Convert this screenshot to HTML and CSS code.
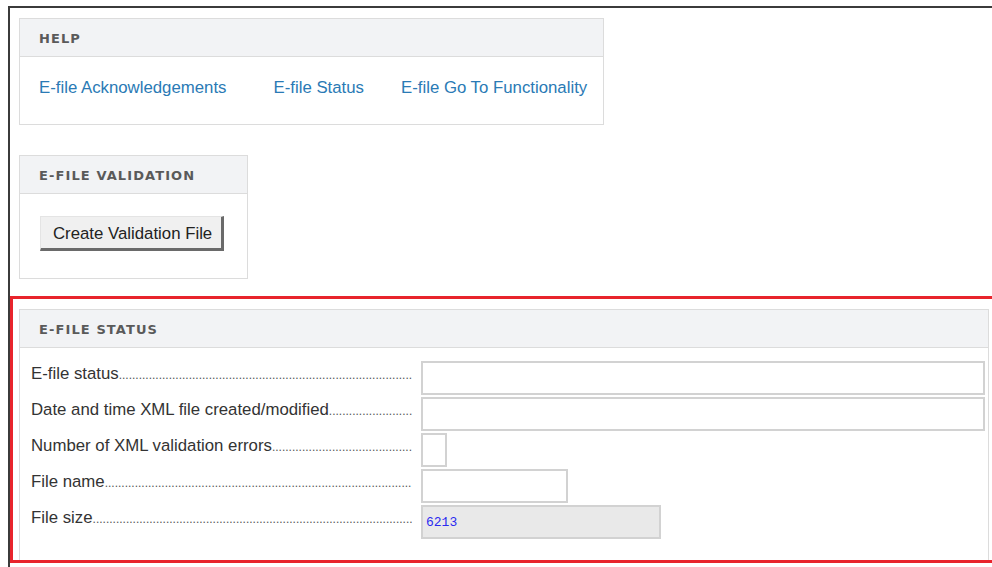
FILE: index.html
```html
<!DOCTYPE html>
<html lang="en">
<head>
<meta charset="utf-8">
<title>E-file</title>
<link rel="stylesheet" href="styles.css">
</head>
<body>
<div class="frame">
  <section class="panel panel-help">
    <h2 class="panel-head">Help</h2>
    <div class="panel-body help-links">
      <a href="#">E-file Acknowledgements</a>
      <a href="#">E-file Status</a>
      <a href="#">E-file Go To Functionality</a>
    </div>
  </section>

  <section class="panel panel-validation">
    <h2 class="panel-head">E-file Validation</h2>
    <div class="panel-body validation-body">
      <button type="button" class="btn">Create Validation File</button>
    </div>
  </section>

  <div class="highlight">
    <section class="panel panel-status">
      <h2 class="panel-head">E-file Status</h2>
      <div class="panel-body status-body">
        <div class="row">
          <label class="label">E-file status</label>
          <input class="field field-wide" type="text">
        </div>
        <div class="row">
          <label class="label">Date and time XML file created/modified</label>
          <input class="field field-wide" type="text">
        </div>
        <div class="row">
          <label class="label">Number of XML validation errors</label>
          <input class="field field-tiny" type="text">
        </div>
        <div class="row">
          <label class="label">File name</label>
          <input class="field field-name" type="text">
        </div>
        <div class="row">
          <label class="label">File size</label>
          <input class="field field-size" type="text" value="6213" readonly>
        </div>
      </div>
    </section>
  </div>
</div>
</body>
</html>
```
FILE: styles.css
```css
html, body {
  margin: 0;
  padding: 0;
  overflow: hidden;
  background: #fff;
}

body {
  font-family: "Liberation Sans", Arial, sans-serif;
  color: #333;
}

.frame {
  margin: 6px 0 0 8px;
  border-top: 2px solid #3b3b3b;
  border-left: 2px solid #3b3b3b;
  padding-top: 10px;
  height: calc(100vh - 6px);
  box-sizing: border-box;
}

.panel {
  border: 1px solid #dcdcdc;
  background: #fff;
  box-sizing: border-box;
}

.panel-head {
  margin: 0;
  height: 37px;
  line-height: 40px;
  padding-left: 19px;
  background: #f2f3f5;
  border-bottom: 1px solid #dcdcdc;
  font-family: "DejaVu Sans", Verdana, sans-serif;
  font-size: 13px;
  font-weight: 700;
  letter-spacing: 1.1px;
  text-transform: uppercase;
  color: #5a5a5a;
}

.panel-help {
  width: 585px;
  margin-left: 9px;
}

.help-links {
  height: 67px;
  display: flex;
  align-items: center;
  padding: 0 0 6px 19px;
  box-sizing: border-box;
  white-space: nowrap;
}

.help-links a {
  flex: none;
  font-size: 16.8px;
  color: #2a7ab5;
  text-decoration: none;
  margin-right: 47px;
}

.help-links a:nth-child(2) {
  margin-right: 37px;
}

.panel-validation {
  width: 229px;
  margin: 30px 0 0 9px;
}

.validation-body {
  height: 84px;
  padding: 22px 0 0 20px;
  box-sizing: border-box;
}

.btn {
  font-family: "Liberation Sans", Arial, sans-serif;
  font-size: 16.8px;
  color: #222;
  background: #f0f0f0;
  height: 35px;
  padding: 2px 9px 0 12px;
  border: 1px solid;
  border-width: 1px 3px 3px 1px;
  border-color: #e4e4e4 #6a6a6a #6a6a6a #e4e4e4;
  border-radius: 0;
}

.highlight {
  margin-top: 17px;
  width: 985px;
  border: 3px solid #e8242c;
  padding: 10px 0 0 6px;
  box-sizing: border-box;
}

.panel-status {
  width: 970px;
  border-bottom: 0;
}

.status-body {
  padding: 13px 0 21px 11px;
}

.row {
  display: flex;
  align-items: flex-start;
  height: 34px;
  margin-bottom: 2px;
}

.row:last-child {
  margin-bottom: 0;
}

.label {
  width: 381px;
  margin: 3px 9px 0 0;
  line-height: 20px;
  font-size: 16.8px;
  white-space: nowrap;
  overflow: hidden;
  color: #333;
}

.label::after {
  content: "..................................................................................................................................................................";
  font-size: 12px;
  color: #555;
}

.field {
  box-sizing: border-box;
  height: 34px;
  border: 2px solid #d2d2d2;
  background: #fff;
  padding: 0 3px;
  margin: 0;
  font-family: "Liberation Mono", "Courier New", monospace;
  font-size: 13px;
  color: #2b2bf0;
  outline: none;
}

.field-wide { width: 564px; }
.field-tiny { width: 26px; }
.field-name { width: 147px; }
.field-size {
  width: 240px;
  background: #e9e9e9;
}
```
